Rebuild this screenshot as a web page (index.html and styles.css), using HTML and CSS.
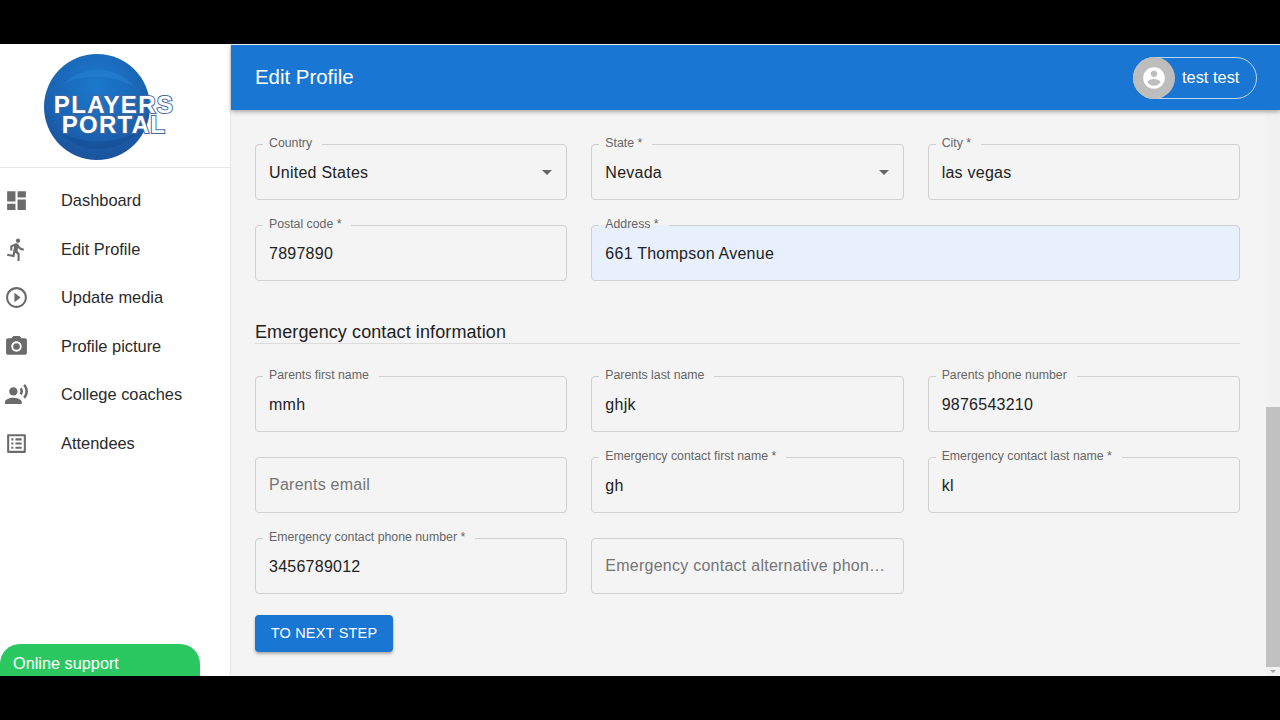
FILE: index.html
```html
<!DOCTYPE html>
<html lang="en">
<head>
  <meta charset="UTF-8">
  <title>Edit Profile</title>
  <link rel="stylesheet" href="styles.css">
</head>
<body>

<div class="black-bar top"></div>

<div class="app">
  <aside class="sidebar">
    <div class="logo-box">
      <svg class="logo" width="140" height="108" viewBox="0 0 140 108">
        <defs>
          <radialGradient id="ball" cx="50%" cy="30%" r="75%">
            <stop offset="0" stop-color="#1c78cc"/>
            <stop offset="0.55" stop-color="#1a66b6"/>
            <stop offset="1" stop-color="#1c4f98"/>
          </radialGradient>
        </defs>
        <circle cx="53" cy="53" r="53" fill="url(#ball)"/>
        <path d="M20 30C38 10 72 10 92 34C74 22 44 18 20 30z" fill="#2a86d6" opacity="0.45"/>
        <path d="M16 78C34 100 74 102 96 76C76 90 40 92 16 78z" fill="#14498f" opacity="0.5"/>
        <text class="logo-text" x="70" y="59" text-anchor="middle">PLAYERS</text>
        <text class="logo-text" x="70" y="79" text-anchor="middle">PORTAL</text>
      </svg>
    </div>

    <nav class="menu">
      <a class="menu-item"><svg viewBox="0 0 24 24"><path d="M3 13h8V3H3v10zm0 8h8v-6H3v6zm10 0h8V11h-8v10zm0-18v6h8V3h-8z"/></svg>Dashboard</a>
      <a class="menu-item"><svg viewBox="0 0 24 24"><path d="M13.49 5.48c1.1 0 2-.9 2-2s-.9-2-2-2-2 .9-2 2 .9 2 2 2zm-3.6 13.9l1-4.4 2.1 2v6h2v-7.5l-2.1-2 .6-3c1.3 1.5 3.3 2.5 5.5 2.5v-2c-1.9 0-3.5-1-4.3-2.4l-1-1.6c-.4-.6-1-1-1.7-1-.3 0-.5.1-.8.1l-5.2 2.2v4.7h2v-3.4l1.8-.7-1.6 8.1-4.9-1-.4 2 7 1.4z"/></svg>Edit Profile</a>
      <a class="menu-item"><svg viewBox="0 0 24 24"><path d="M10 16.5l6-4.5-6-4.5v9zM12 2C6.48 2 2 6.48 2 12s4.48 10 10 10 10-4.48 10-10S17.52 2 12 2zm0 18c-4.41 0-8-3.59-8-8s3.59-8 8-8 8 3.59 8 8-3.59 8-8 8z"/></svg>Update media</a>
      <a class="menu-item"><svg viewBox="0 0 24 24"><circle cx="12" cy="12" r="3.2"/><path d="M9 2L7.17 4H4c-1.1 0-2 .9-2 2v12c0 1.1.9 2 2 2h16c1.1 0 2-.9 2-2V6c0-1.1-.9-2-2-2h-3.17L15 2H9zm3 15c-2.76 0-5-2.24-5-5s2.24-5 5-5 5 2.24 5 5-2.24 5-5 5z"/></svg>Profile picture</a>
      <a class="menu-item"><svg viewBox="0 0 24 24"><circle cx="9" cy="9" r="4"/><path d="M9 15c-2.67 0-8 1.34-8 4v2h16v-2c0-2.66-5.33-4-8-4zm7.76-9.64l-1.68 1.69c.84 1.18.84 2.71 0 3.89l1.68 1.69c2.02-2.02 2.02-5.07 0-7.27zM20.07 2l-1.63 1.63c2.77 3.02 2.77 7.56 0 10.74L20.07 16c3.9-3.89 3.91-9.95 0-14z"/></svg>College coaches</a>
      <a class="menu-item"><svg viewBox="0 0 24 24"><path d="M19 5v14H5V5h14m1.1-2H3.9c-.5 0-.9.4-.9.9v16.2c0 .4.4.9.9.9h16.2c.4 0 .9-.5.9-.9V3.9c0-.5-.5-.9-.9-.9zM11 7h6v2h-6V7zm0 4h6v2h-6v-2zm0 4h6v2h-6zM7 7h2v2H7zm0 4h2v2H7zm0 4h2v2H7z"/></svg>Attendees</a>
    </nav>

    <div class="support">Online support</div>
  </aside>

  <div class="main">
    <header class="topbar">
      <div class="page-title">Edit Profile</div>
      <div class="user-chip">
        <span class="avatar">
          <svg viewBox="0 0 24 24"><path d="M12 2C6.48 2 2 6.48 2 12s4.48 10 10 10 10-4.48 10-10S17.52 2 12 2zm0 3c1.66 0 3 1.34 3 3s-1.34 3-3 3-3-1.34-3-3 1.34-3 3-3zm0 14.2c-2.5 0-4.71-1.28-6-3.22.03-1.99 4-3.08 6-3.08 1.99 0 5.97 1.09 6 3.08-1.29 1.94-3.5 3.22-6 3.22z"/></svg>
        </span>
        <span class="user-name">test test</span>
      </div>
    </header>

    <div class="page">
      <form class="content">
        <div class="fields">
          <fieldset class="field">
            <legend>Country</legend>
            <div class="select-value">United States<span class="arrow"></span></div>
          </fieldset>
          <fieldset class="field">
            <legend>State *</legend>
            <div class="select-value">Nevada<span class="arrow"></span></div>
          </fieldset>
          <fieldset class="field">
            <legend>City *</legend>
            <input type="text" value="las vegas">
          </fieldset>
          <fieldset class="field">
            <legend>Postal code *</legend>
            <input type="text" value="7897890">
          </fieldset>
          <fieldset class="field autofilled span-2">
            <legend>Address *</legend>
            <input type="text" value="661 Thompson Avenue">
          </fieldset>
        </div>

        <h2 class="section-title">Emergency contact information</h2>

        <div class="fields">
          <fieldset class="field">
            <legend>Parents first name</legend>
            <input type="text" value="mmh">
          </fieldset>
          <fieldset class="field">
            <legend>Parents last name</legend>
            <input type="text" value="ghjk">
          </fieldset>
          <fieldset class="field">
            <legend>Parents phone number</legend>
            <input type="text" value="9876543210">
          </fieldset>
          <fieldset class="field no-label">
            <input type="text" placeholder="Parents email">
          </fieldset>
          <fieldset class="field">
            <legend>Emergency contact first name *</legend>
            <input type="text" value="gh">
          </fieldset>
          <fieldset class="field">
            <legend>Emergency contact last name *</legend>
            <input type="text" value="kl">
          </fieldset>
          <fieldset class="field">
            <legend>Emergency contact phone number *</legend>
            <input type="text" value="3456789012">
          </fieldset>
          <fieldset class="field no-label">
            <input type="text" placeholder="Emergency contact alternative phone number">
          </fieldset>
        </div>

        <button type="button" class="btn">TO NEXT STEP</button>
      </form>

      <div class="scrollbar">
        <div class="scroll-thumb"></div>
        <div class="scroll-down"></div>
      </div>
    </div>
  </div>
</div>

<div class="black-bar bottom"></div>

</body>
</html>
```

FILE: styles.css
```css
* {
  box-sizing: border-box;
}

body {
  font-family: "Liberation Sans", Arial, sans-serif;
  margin: 0;
  height: 720px;
  overflow: hidden;
  display: flex;
  flex-direction: column;
  background-color: #000;
  color: #222;
}

.black-bar.top {
  height: 44px;
}

.black-bar.bottom {
  height: 44px;
}

.app {
  height: 632px;
  display: flex;
  overflow: hidden;
  background-color: #f4f4f4;
}

/* sidebar */
.sidebar {
  width: 231px;
  flex-shrink: 0;
  display: flex;
  flex-direction: column;
  background-color: #fff;
  border-right: 1px solid #e6e6e6;
}

.logo-box {
  height: 124px;
  padding: 10px 0 0 44px;
  border-bottom: 1px solid #e6e6e6;
}

.logo {
  display: block;
  overflow: visible;
}

.logo-text {
  font-family: "Liberation Sans", Arial, sans-serif;
  font-weight: bold;
  font-size: 24px;
  letter-spacing: 1.3px;
  fill: #fff;
  stroke: #45689f;
  stroke-width: 2px;
  paint-order: stroke;
}

.menu {
  display: flex;
  flex-direction: column;
  padding-top: 8.5px;
}

.menu-item {
  height: 48.5px;
  display: flex;
  align-items: center;
  font-size: 16.4px;
  color: #2a2a2a;
  padding-left: 4px;
}

.menu-item svg {
  width: 25px;
  height: 25px;
  margin-right: 32px;
  fill: #6b6b6b;
  flex-shrink: 0;
}

.support {
  margin-top: auto;
  width: 200px;
  height: 32px;
  padding: 10px 0 0 13px;
  font-size: 16.3px;
  line-height: 18px;
  color: #fff;
  background-color: #2bc862;
  border-radius: 20px 20px 0 0;
}

/* top bar */
.main {
  flex: 1;
  min-width: 0;
  display: flex;
  flex-direction: column;
}

.topbar {
  height: 65px;
  margin-top: 1px;
  flex-shrink: 0;
  padding: 0 23px 0 24px;
  display: flex;
  justify-content: space-between;
  align-items: center;
  background-color: #1976d2;
  color: #fff;
  box-shadow: 0 2px 4px rgba(0,0,0,0.3);
  position: relative;
}

.page-title {
  font-size: 20.4px;
}

.user-chip {
  width: 124px;
  height: 42px;
  display: flex;
  align-items: center;
  gap: 7px;
  border: 1px solid rgba(255,255,255,0.7);
  border-radius: 21px;
}

.avatar {
  width: 42px;
  height: 42px;
  margin-left: -1px;
  border-radius: 50%;
  background-color: #bdbdbd;
  display: flex;
  align-items: center;
  justify-content: center;
}

.avatar svg {
  width: 26px;
  height: 26px;
  fill: #fff;
}

.user-name {
  font-size: 16.4px;
}

/* form */
.page {
  flex: 1;
  min-height: 0;
  display: flex;
}

.content {
  flex: 1;
  padding: 27px 26px 0 24px;
}

.fields {
  display: grid;
  grid-template-columns: repeat(3, 1fr);
  column-gap: 24px;
  row-gap: 18px;
}

.span-2 {
  grid-column: span 2;
}

.field {
  margin: 0;
  padding: 0 13px 5px 13px;
  height: 63px;
  min-width: 0;
  border: 1px solid #d0d0d0;
  border-radius: 4px;
  display: flex;
  align-items: center;
}

.field legend {
  padding: 0 10px 2px 6px;
  margin-left: -6px;
  font-size: 12.3px;
  line-height: 12px;
  color: #666;
}

.field.no-label {
  height: 56px;
  padding-bottom: 1px;
  align-self: end;
}

.autofilled {
  background-color: #e8f0fe;
}

.field input {
  width: 100%;
  border: none;
  outline: none;
  padding: 0;
  background: none;
  font-family: inherit;
  font-size: 16px;
  letter-spacing: 0.25px;
  color: #222;
  text-overflow: ellipsis;
}

.field input::placeholder {
  color: #757575;
  opacity: 1;
}

.select-value {
  width: 100%;
  display: flex;
  justify-content: space-between;
  align-items: center;
  font-size: 16px;
  letter-spacing: 0.25px;
}

.arrow {
  width: 0;
  height: 0;
  margin-right: 1px;
  border-left: 5px solid transparent;
  border-right: 5px solid transparent;
  border-top: 5px solid #666;
}

.section-title {
  margin: 41px 0 25px;
  font-size: 18px;
  font-weight: normal;
  line-height: 21px;
  letter-spacing: 0.1px;
  border-bottom: 1px solid #dcdcdc;
}

.btn {
  display: block;
  width: 138px;
  height: 37px;
  margin-top: 21px;
  padding: 0 0 2px;
  border: none;
  border-radius: 4px;
  background-color: #1976d2;
  color: #fff;
  font-family: inherit;
  font-size: 14.5px;
  letter-spacing: 0.2px;
  box-shadow: 0 2px 3px rgba(0,0,0,0.3);
}

/* scrollbar on the right */
.scrollbar {
  width: 14px;
  flex-shrink: 0;
  display: flex;
  flex-direction: column;
  justify-content: flex-end;
  background-color: #f1f1f1;
}

.scroll-thumb {
  height: 260px;
  background-color: #c1c1c1;
}

.scroll-down {
  height: 9px;
  display: flex;
  justify-content: center;
  align-items: center;
}

.scroll-down::after {
  content: "";
  border-left: 3px solid transparent;
  border-right: 3px solid transparent;
  border-top: 3px solid #a3a3a3;
}
```
